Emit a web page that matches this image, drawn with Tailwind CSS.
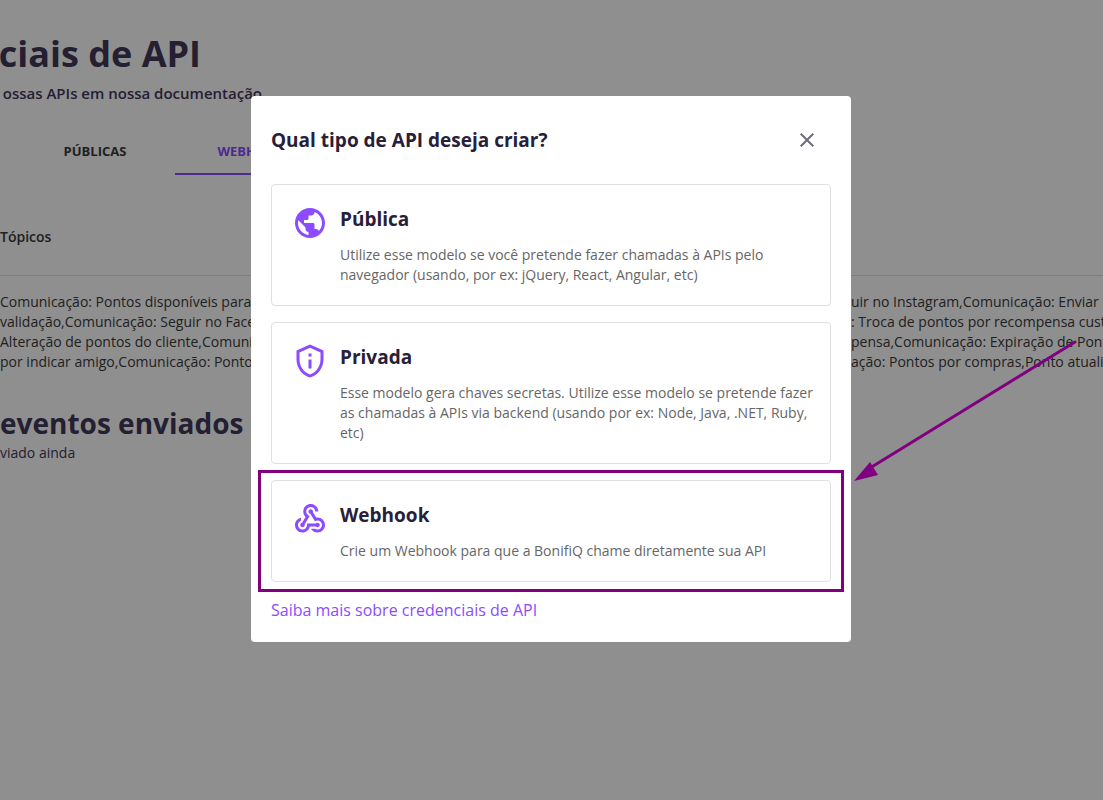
<!DOCTYPE html>
<html lang="pt-BR">

<head>
    <meta charset="UTF-8">
    <meta name="viewport" content="width=device-width, initial-scale=1.0">
    <title>Credenciais de API</title>
    <script src="https://cdn.jsdelivr.net/npm/@tailwindcss/browser@4"></script>
</head>

<body class="bg-white text-[#3a3a3a] font-['Open_Sans','Noto_Sans',sans-serif] min-h-screen overflow-hidden">
    <main class="overflow-hidden whitespace-nowrap">
        <header class="pt-8 text-[#43385a]">
            <h1 class="flex w-[201px] h-11 justify-end text-4xl leading-[44px] font-bold">ciais de API</h1>
            <p class="flex w-[262px] justify-end mt-[3px] text-[15px] leading-7 font-semibold">ossas APIs em nossa documentação</p>
        </header>
        <!-- Abas -->
        <nav class="flex mt-5 pl-[15px] text-[13px] font-bold">
            <button class="w-40 h-12 pt-1 border-b-2 border-transparent">PÚBLICAS</button>
            <button class="w-40 h-12 pt-1 border-b-2 border-[#8c4bff] text-[#8c4bff]">WEBHOOKS</button>
        </nav>
        <table class="w-full mt-5 text-sm text-left">
            <thead>
                <tr class="border-b border-[#e0e0e0]">
                    <th class="h-20 pt-1 font-semibold">Tópicos</th>
                </tr>
            </thead>
            <tbody>
                <tr>
                    <td class="pt-4 leading-5">
                        <div class="flex justify-between"><span>Comunicação: Pontos disponíveis para</span><span class="w-[252px]">uir no Instagram,Comunicação: Enviar c</span></div>
                        <div class="flex justify-between"><span>validação,Comunicação: Seguir no Face</span><span class="w-[252px]">: Troca de pontos por recompensa custo</span></div>
                        <div class="flex justify-between"><span>Alteração de pontos do cliente,Comunic</span><span class="w-[252px]">pensa,Comunicação: Expiração de Ponto</span></div>
                        <div class="flex justify-between"><span>por indicar amigo,Comunicação: Pontos</span><span class="w-[252px]">ação: Pontos por compras,Ponto atualiza</span></div>
                    </td>
                </tr>
            </tbody>
        </table>
        <section class="mt-[31px] text-[#43385a]">
            <h2 class="text-[28px] leading-10 font-bold">eventos enviados</h2>
            <p class="text-sm">viado ainda</p>
        </section>
    </main>

    <!-- Modal -->
    <div class="fixed inset-0 flex items-start justify-center bg-black/44 pt-24 pr-px">
        <div role="dialog" aria-labelledby="modalTitle" class="w-full max-w-[600px] rounded bg-white p-5">
            <div class="flex h-12 items-center justify-between">
                <h2 id="modalTitle" class="text-[19px] font-bold text-[#272038]">Qual tipo de API deseja criar?</h2>
                <button aria-label="Fechar" class="flex size-12 items-center justify-center text-[#6f6a7b]">
                    <svg class="size-6" viewBox="0 0 24 24" fill="currentColor">
                        <path d="M19 6.41 17.59 5 12 10.59 6.41 5 5 6.41 10.59 12 5 17.59 6.41 19 12 13.41 17.59 19 19 17.59 13.41 12z" />
                    </svg>
                </button>
            </div>
            <div class="mt-5 flex flex-col gap-4">
                <button class="flex items-start gap-3 rounded border border-[#e0e0e0] p-5 pr-2 text-left">
                    <svg class="size-9 shrink-0 text-[#8c4bff]" viewBox="0 0 24 24" fill="currentColor">
                        <path d="M12 2C6.48 2 2 6.48 2 12s4.48 10 10 10 10-4.48 10-10S17.52 2 12 2zm-1 17.93c-3.95-.49-7-3.85-7-7.93 0-.62.08-1.21.21-1.79L9 15v1c0 1.1.9 2 2 2v1.93zm6.9-2.54c-.26-.81-1-1.39-1.9-1.39h-1v-3c0-.55-.45-1-1-1H8v-2h2c.55 0 1-.45 1-1V7h2c1.1 0 2-.9 2-2v-.41c2.93 1.19 5 4.06 5 7.41 0 2.08-.8 3.97-2.1 5.39z" />
                    </svg>
                    <span class="flex flex-col gap-3">
                        <span class="text-[19px] leading-7 font-bold text-[#272038]">Pública</span>
                        <span class="text-sm leading-5 text-[#666]">Utilize esse modelo se você pretende fazer chamadas à APIs pelo navegador (usando, por ex: jQuery, React, Angular, etc)</span>
                    </span>
                </button>
                <button class="flex items-start gap-3 rounded border border-[#e0e0e0] p-5 pr-2 text-left">
                    <svg class="size-9 shrink-0 text-[#8c4bff]" viewBox="0 0 24 24" fill="currentColor">
                        <path d="M12 1 3 5v6c0 5.55 3.84 10.74 9 12 5.16-1.26 9-6.45 9-12V5l-9-4zm7 10c0 4.52-2.98 8.69-7 9.93-4.02-1.24-7-5.41-7-9.93V6.3l7-3.11 7 3.11V11zm-8 0h2v6h-2v-6zm0-4h2v2h-2V7z" />
                    </svg>
                    <span class="flex flex-col gap-3">
                        <span class="text-[19px] leading-7 font-bold text-[#272038]">Privada</span>
                        <span class="text-sm leading-5 text-[#666]">Esse modelo gera chaves secretas. Utilize esse modelo se pretende fazer as chamadas à APIs via backend (usando por ex: Node, Java, .NET, Ruby, etc)</span>
                    </span>
                </button>
                <button class="relative flex items-start gap-3 rounded border border-[#e0e0e0] p-5 pr-2 text-left">
                    <svg class="size-9 shrink-0 text-[#8c4bff]" viewBox="0 0 24 24" fill="currentColor">
                        <path d="M10 15h5.88c.27-.31.67-.5 1.12-.5.83 0 1.5.67 1.5 1.5s-.67 1.5-1.5 1.5c-.44 0-.84-.19-1.12-.5H11.9c-.46 2.28-2.48 4-4.9 4-2.76 0-5-2.24-5-5 0-2.42 1.72-4.44 4-4.9v2.07C4.84 13.58 4 14.7 4 16c0 1.65 1.35 3 3 3s3-1.35 3-3v-1zm2.5-11c1.65 0 3 1.35 3 3h2c0-2.76-2.24-5-5-5s-5 2.24-5 5c0 1.43.6 2.71 1.55 3.62l-2.35 3.9c-.68.14-1.2.75-1.2 1.48 0 .83.67 1.5 1.5 1.5s1.5-.67 1.5-1.5c0-.16-.02-.31-.07-.45l3.38-5.63C10.49 9.61 9.5 8.42 9.5 7c0-1.65 1.35-3 3-3zm4.5 9c-.64 0-1.23.2-1.72.54l-3.05-5.07C11.53 8.35 11 7.74 11 7c0-.83.67-1.5 1.5-1.5S14 6.17 14 7c0 .15-.02.29-.06.43l2.19 3.65c.28-.05.57-.08.87-.08 2.76 0 5 2.24 5 5s-2.24 5-5 5c-1.85 0-3.47-1.01-4.33-2.5h2.67c.48.32 1.05.5 1.66.5 1.65 0 3-1.35 3-3s-1.35-3-3-3z" />
                    </svg>
                    <span class="flex flex-col gap-3">
                        <span class="text-[19px] leading-7 font-bold text-[#272038]">Webhook</span>
                        <span class="text-sm leading-5 text-[#666]">Crie um Webhook para que a BonifiQ chame diretamente sua API</span>
                    </span>
                    <!-- destaque e seta -->
                    <span class="absolute -inset-x-[14px] -inset-y-[11px] border-[3px] border-[#800080]"></span>
                    <svg class="absolute bottom-[95px] left-full ml-5 h-[146px] w-[230px]" viewBox="0 0 230 146">
                        <path d="M20 128 225 2" stroke="#800080" stroke-width="3" stroke-linecap="round" />
                        <path d="M4 141 20 122 28 135z" fill="#800080" />
                    </svg>
                </button>
            </div>
            <a href="#" class="mt-4 block leading-6 text-[#8c4bff]">Saiba mais sobre credenciais de API</a>
        </div>
    </div>
</body>

</html>
